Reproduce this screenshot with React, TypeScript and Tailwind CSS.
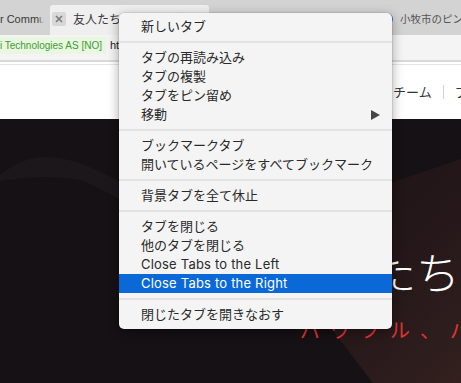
import React from "react";

const UI = { fontFamily: '"Inter", "Noto Sans CJK JP", sans-serif' };
const LS = { fontFamily: '"Liberation Sans", "Noto Sans CJK JP", sans-serif' };
const JP = { fontFamily: '"Noto Sans CJK JP", "Inter", sans-serif' };

type Item = { label?: string; sep?: boolean; arrow?: boolean; active?: boolean };

const items: Item[] = [
  { label: "新しいタブ" },
  { sep: true },
  { label: "タブの再読み込み" },
  { label: "タブの複製" },
  { label: "タブをピン留め" },
  { label: "移動", arrow: true },
  { sep: true },
  { label: "ブックマークタブ" },
  { label: "開いているページをすべてブックマーク" },
  { sep: true },
  { label: "背景タブを全て休止" },
  { sep: true },
  { label: "タブを閉じる" },
  { label: "他のタブを閉じる" },
  { label: "Close Tabs to the Left" },
  { label: "Close Tabs to the Right", active: true },
  { sep: true },
  { label: "閉じたタブを開きなおす" },
];

function ContextMenu() {
  return (
    <div
      className="absolute left-[119px] top-[13px] w-[273px] flex flex-col pt-[4px] pb-[5px] rounded-[5px] bg-[#f4f4f4] shadow-[0_3px_12px_rgba(0,0,0,0.35),0_0_0_0.5px_rgba(0,0,0,0.15)] text-[13px] text-[#2a2a2a]"
      style={UI}
    >
      {items.map((it, i) =>
        it.sep ? (
          <div key={i} className="h-[12px] flex items-center">
            <div className="h-[2px] w-full bg-[#e2e2e2]" />
          </div>
        ) : (
          <div
            key={i}
            className={
              "h-[19px] flex items-center justify-between pl-[22px] pr-[12px] leading-none whitespace-nowrap " +
              (it.active ? "bg-[#0a69d7] text-white" : "")
            }
          >
            <span className={/[A-Za-z]/.test(it.label || "") ? "tracking-[0.2px]" : ""}>{it.label}</span>
            {it.arrow && (
              <svg width="9" height="10" viewBox="0 0 9 10">
                <path d="M0 0 L9 5 L0 10 Z" fill="#454545" />
              </svg>
            )}
          </div>
        )
      )}
    </div>
  );
}

function TabStrip() {
  return (
    <div className="h-[35px] bg-[#d3d3d3] flex items-end text-[#3a3a3a]">
      <div className="relative w-[48px] h-[30px] overflow-hidden flex items-center pb-[2px]">
        <span className="whitespace-nowrap ml-[-72px] text-[11px]" style={LS}>
          Vivaldi Browser Community
        </span>
        <div className="absolute right-[4px] top-0 bottom-0 w-[6px] bg-gradient-to-r from-[#d3d3d300] to-[#d3d3d3]" />
        <div className="absolute right-0 top-0 bottom-0 w-[4px] bg-[#d3d3d3]" />
      </div>
      <div className="ml-[2px] w-[159px] h-[30px] bg-[#efefef] rounded-t-[3px] flex items-center pl-[2px] pb-[2px] overflow-hidden">
        <div className="w-[14px] h-[14px] bg-[#d8d8d8] rounded-[2px] flex items-center justify-center shrink-0">
          <svg width="8" height="8" viewBox="0 0 8 8">
            <path d="M1 1 L7 7 M7 1 L1 7" stroke="#7a7a7a" strokeWidth="1.6" />
          </svg>
        </div>
        <span className="ml-[7px] whitespace-nowrap text-[12px]" style={JP}>
          友人たちのためのブラウザー
        </span>
      </div>
      <div className="flex-1" />
      <div className="w-[83px] h-[30px] flex items-center pl-[3px] pb-[3px] overflow-hidden">
        <div className="w-[12px] h-[12px] rounded-full bg-[#3b7bc8] shrink-0" />
        <span className="ml-[7px] whitespace-nowrap text-[10.5px] text-[#555]" style={JP}>
          小牧市のピンク
        </span>
      </div>
    </div>
  );
}

function Toolbar() {
  return (
    <div className="h-[25px] bg-[#f4f4f4] flex items-start pt-[2px]" style={LS}>
      <div className="w-[106px] h-[17px] bg-[#e9f6e2] flex items-center justify-end overflow-hidden pr-[4px] text-[10px]">
        <span className="whitespace-nowrap text-[#3f9c33]">Vivaldi Technologies AS [NO]</span>
      </div>
      <div className="h-[17px] flex items-center ml-[4px] text-[#222] whitespace-nowrap text-[11px]">
        https://vivaldi.com/ja/
      </div>
    </div>
  );
}

function Page() {
  return (
    <div className="h-[54px] bg-white flex items-center text-[13px] text-[#333] whitespace-nowrap overflow-hidden" style={JP}>
      <div className="ml-[344px] flex items-center">
        <span>製品</span>
        <span className="w-px h-[14px] bg-[#d4d4d4] mx-[11px]" />
        <span>チーム</span>
        <span className="w-px h-[14px] bg-[#d4d4d4] mx-[11px]" />
        <span>ブログ</span>
      </div>
    </div>
  );
}

function Hero() {
  return (
    <div className="relative flex-1 bg-[#161114] overflow-hidden">
      <svg className="absolute inset-0" width="461" height="264" viewBox="0 0 461 264">
        <defs>
          <linearGradient id="br" x1="0" y1="0" x2="1" y2="1">
            <stop offset="0" stopColor="#181215" />
            <stop offset="0.55" stopColor="#241719" />
            <stop offset="1" stopColor="#33201f" />
          </linearGradient>
        </defs>
        <path
          d="M0,56 C15,44 30,38 45,38 C75,38 100,52 130,68 L130,85 C110,76 95,66 80,61 C55,56 25,58 0,62 Z"
          fill="#1c171a"
        />
        <path d="M255,110 L461,40 L461,264 L373,264 Z" fill="url(#br)" />
      </svg>
      <div className="relative flex flex-col" style={JP}>
        <div className="mt-[130px] pl-[284px] text-[44px] leading-[44px] font-light text-white whitespace-nowrap">
          友人たちのためのブラウザー
        </div>
        <div className="mt-[27px] pl-[300px] text-[20px] leading-[20px] text-[#e03434] whitespace-nowrap flex">
          {"パワフル、パーソナル".split("").map((c, i) => (
            <span key={i} className="w-[30px] shrink-0">
              {c}
            </span>
          ))}
        </div>
      </div>
    </div>
  );
}

export default function App() {
  return (
    <div className="relative w-[461px] h-[383px] overflow-hidden flex flex-col bg-[#161114]">
      <TabStrip />
      <Toolbar />
      <div className="h-[2px] bg-[#d9d9d9]" />
      <div className="h-[2px] bg-white" />
      <div className="h-[1px] bg-[#e6e6e6]" />
      <Page />
      <Hero />
      <ContextMenu />
    </div>
  );
}
